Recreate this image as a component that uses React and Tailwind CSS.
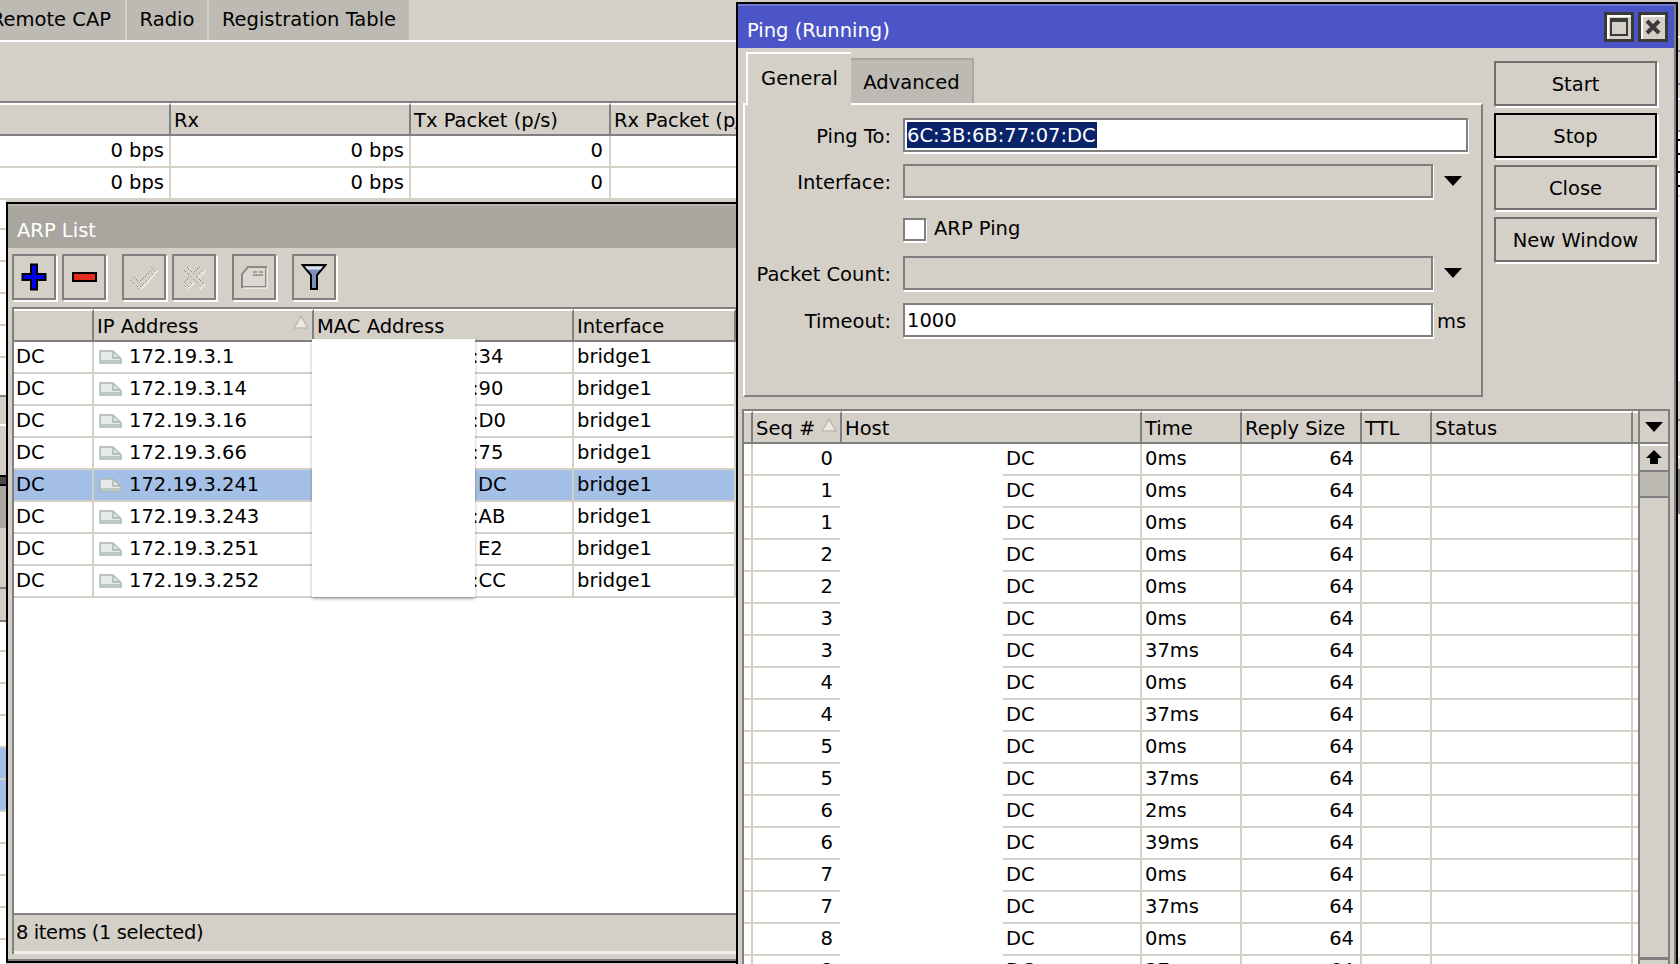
import React from 'react';

const arpRows = [
  { ip: '172.19.3.1', mac: ':34' },
  { ip: '172.19.3.14', mac: ':90' },
  { ip: '172.19.3.16', mac: ':D0' },
  { ip: '172.19.3.66', mac: ':75' },
  { ip: '172.19.3.241', mac: 'DC', selected: true },
  { ip: '172.19.3.243', mac: ':AB' },
  { ip: '172.19.3.251', mac: 'E2' },
  { ip: '172.19.3.252', mac: ':CC' },
];

const pingRows = [
  ['0', '0ms'], ['1', '0ms'], ['1', '0ms'], ['2', '0ms'], ['2', '0ms'], ['3', '0ms'],
  ['3', '37ms'], ['4', '0ms'], ['4', '37ms'], ['5', '0ms'], ['5', '37ms'], ['6', '2ms'],
  ['6', '39ms'], ['7', '0ms'], ['7', '37ms'], ['8', '0ms'], ['8', '37ms'],
];

const whiteRow = 'h-[32px] bg-white border-b-2 border-[#d4d0c8]';
const blueRow = 'h-[32px] bg-[#a4c0e6] border-b-2 border-[#d4d0c8]';

// what is still visible of the window behind the ARP list, on the far left
const leftStrip = [
  'h-[30px] bg-white border-b-2 border-[#d4d0c8]',
  whiteRow, whiteRow, whiteRow, whiteRow,
  'h-[37px] bg-white',
  'h-[29px] bg-[#d4d0c8] border-t-2 border-[#808080]',
  'h-[51px] bg-[#d4d0c8] border-t-2 border-white',
  'h-[11px] bg-[#4a4a4a] border-y-2 border-black',
  'h-[42px] bg-[#a9a69f]',
  'h-[59px] bg-[#d4d0c8]',
  'h-[33px] bg-[#d4d0c8] border-t-2 border-[#808080]',
  'h-[32px] bg-white border-t-2 border-[#808080] border-b-2 border-b-[#d4d0c8]',
  whiteRow, whiteRow, whiteRow,
  blueRow, blueRow,
  whiteRow, whiteRow, whiteRow, whiteRow, whiteRow,
];

// and on the far right, past the ping window
const rightStrip = [
  'h-[36px] bg-[#d4d0c8]', 'h-[2px] bg-white', 'h-[12px] bg-[#d4d0c8]', 'h-[2px] bg-[#808080]',
  'h-[31px] bg-[#d4d0c8]', 'h-[2px] bg-[#808080]', 'h-[13px] bg-[#d4d0c8]', 'h-[2px] bg-white',
  'h-[30px] bg-[#d4d0c8]', 'h-[2px] bg-[#808080]', 'h-[7px] bg-white', 'h-[2px] bg-black',
  'h-[12px] bg-white', 'h-[2px] bg-black', 'h-[16px] bg-white', 'h-[2px] bg-black',
  'h-[12px] bg-white', 'h-[2px] bg-black', 'h-[8px] bg-white', 'h-[2px] bg-[#d4d0c8]',
  'h-[184px] bg-white', 'h-[38px] bg-[#d4d0c8]', 'h-[2px] bg-[#808080]', 'h-[35px] bg-[#d4d0c8]',
  'h-[2px] bg-white', 'h-[11px] bg-[#d4d0c8]', 'h-[45px] bg-[#808080]', 'h-[444px] bg-[#e8e6e0]',
];

const SortMark = ({ className }) => (
  <svg width="16" height="14" viewBox="0 0 16 14" className={`absolute right-[3px] ${className}`}>
    <path d="M8 1 L15 13 L1 13 Z" fill="#ece9e3" stroke="#bdbab3" strokeWidth="1.5" />
  </svg>
);

const DropArrow = () => (
  <svg width="18" height="10" viewBox="0 0 18 10"><path d="M0 0 H18 L9 10 Z" fill="#000" /></svg>
);

const FileIcon = () => (
  <svg width="23" height="14" viewBox="0 0 23 14" className="shrink-0">
    <path d="M1 1 H14 L22 9 V13 H1 Z" fill="#e6ebe8" stroke="#a9b5b0" strokeWidth="1.5" />
    <path d="M14 1 V8 H22" fill="none" stroke="#a9b5b0" strokeWidth="1.5" />
    <path d="M2 10 H21 V13 H2 Z" fill="#bccac4" />
  </svg>
);

// greyed out check and cross: a dithered outline with a white edge below it
const Dither = ({ id }) => (
  <defs>
    <pattern id={id} width="3" height="3" patternUnits="userSpaceOnUse">
      <rect width="1.5" height="1.5" fill="#85857f" />
      <rect x="1.5" y="1.5" width="1.5" height="1.5" fill="#85857f" />
      <rect x="1.5" width="1.5" height="1.5" fill="#e8e6e0" />
      <rect y="1.5" width="1.5" height="1.5" fill="#e8e6e0" />
    </pattern>
  </defs>
);

const ToolButton = ({ children, className = '' }) => (
  <div className={`flex h-[46px] w-[44px] items-center justify-center border-2 border-[#808080] shadow-[2px_2px_0_#fff] ${className}`}>
    {children}
  </div>
);

const HeadCell = ({ children, className = '' }) => (
  <div className={`relative flex h-full items-center overflow-hidden whitespace-nowrap border-r-2 border-t-2 border-[#808080] border-t-white pl-[3px] pt-[2px] ${className}`}>
    {children}
  </div>
);

const Cell = ({ children, className = '' }) => (
  <div className={`flex h-[32px] items-center overflow-hidden whitespace-nowrap border-r-2 border-b-2 border-[#d4d0c8] pb-[1px] ${className}`}>
    {children}
  </div>
);

const SideButton = ({ children, active }) => (
  <div className={`flex h-[45px] w-[163px] items-center justify-center border-2 pt-[2px] shadow-[2px_2px_0_#fff] ${active ? 'border-black' : 'border-[#707070]'}`}>
    {children}
  </div>
);

const Field = ({ white, width, children }) => (
  <div className={`flex h-[34px] items-center border-2 border-[#808080] pl-[2px] shadow-[1px_2px_0_#fff] ${white ? 'bg-white' : ''} ${width}`}>
    {children}
  </div>
);

const FormRow = ({ label, gap, children }) => (
  <div className={`flex items-center ${gap}`}>
    <div className="w-[146px] whitespace-nowrap pt-[3px] text-right">{label}</div>
    <div className="ml-[12px] flex items-center">{children}</div>
  </div>
);

function BackWindow() {
  return (
    <div className="flex h-[200px] flex-col">
      <div className="flex h-[40px]">
        <div className="flex w-[125px] items-center justify-end overflow-hidden whitespace-nowrap bg-[#bdbab3] pr-[14px]">Remote CAP</div>
        <div className="ml-[2px] flex w-[80px] items-center justify-center bg-[#bdbab3]">Radio</div>
        <div className="ml-[2px] flex w-[200px] items-center justify-center whitespace-nowrap bg-[#bdbab3]">Registration Table</div>
      </div>
      <div className="h-[61px] border-t-2 border-white" />
      <div className="grid h-[35px] grid-cols-[171px_240px_200px_1fr] border-y-2 border-[#808080]">
        <HeadCell />
        <HeadCell>Rx</HeadCell>
        <HeadCell>Tx Packet (p/s)</HeadCell>
        <HeadCell>Rx Packet (p/s)</HeadCell>
      </div>
      {[0, 1].map((i) => (
        <div key={i} className="grid grid-cols-[171px_240px_200px_1fr] bg-white">
          <Cell className="justify-end pr-[5px]">0 bps</Cell>
          <Cell className="justify-end pr-[5px]">0 bps</Cell>
          <Cell className="justify-end pr-[6px]">0</Cell>
          <Cell />
        </div>
      ))}
    </div>
  );
}

function ArpWindow() {
  return (
    <div className="absolute left-[6px] top-[202px] flex h-[761px] w-[732px] flex-col border-2 border-black bg-[#d4d0c8]">
      <div className="flex h-[44px] items-center border-t-2 border-[#b8b5ae] bg-[#a9a69f] pl-[9px] pt-[8px] text-white">ARP List</div>

      <div className="flex h-[59px] items-start pl-[4px] pt-[6px]">
        <ToolButton>
          <svg width="26" height="28" viewBox="0 0 26 28"><path d="M10 1.5 H16 V11 H24.5 V17 H16 V26.5 H10 V17 H1.5 V11 H10 Z" fill="#0000f0" stroke="#000" strokeWidth="2" /></svg>
        </ToolButton>
        <ToolButton className="ml-[6px]">
          <svg width="25" height="10" viewBox="0 0 25 10"><rect x="1" y="1" width="23" height="8" fill="#e62a1c" stroke="#000" strokeWidth="2" /></svg>
        </ToolButton>
        <ToolButton className="ml-[16px]">
          <svg width="27" height="24" viewBox="0 0 27 24">
            <Dither id="dither-check" />
            <path d="M3 14 L10 21 L25 4" fill="none" stroke="#f4f3ef" strokeWidth="6" />
            <path d="M2 13 L9 20 L24 3" fill="none" stroke="url(#dither-check)" strokeWidth="6" />
            <path d="M2 13 L9 20 L24 3" fill="none" stroke="#d4d0c8" strokeWidth="2" />
          </svg>
        </ToolButton>
        <ToolButton className="ml-[6px]">
          <svg width="24" height="25" viewBox="0 0 24 25">
            <Dither id="dither-cross" />
            <path d="M4 4 L21 22 M21 4 L4 22" fill="none" stroke="#f4f3ef" strokeWidth="7" />
            <path d="M3 3 L20 21 M20 3 L3 21" fill="none" stroke="url(#dither-cross)" strokeWidth="7" />
            <path d="M3 3 L20 21 M20 3 L3 21" fill="none" stroke="#d4d0c8" strokeWidth="3" />
          </svg>
        </ToolButton>
        <ToolButton className="ml-[16px]">
          <svg width="28" height="24" viewBox="0 0 28 24">
            <path d="M8 2 H26 V22 H2 V9 Z" fill="#dcd9d2" stroke="#8a8a84" strokeWidth="2" />
            <path d="M3 23 H27 V3" fill="none" stroke="#fff" strokeWidth="1" />
            <path d="M13 7 H17 M19 7 H23 M13 10 H23" stroke="#8a8a84" strokeWidth="1.5" />
          </svg>
        </ToolButton>
        <ToolButton className="ml-[16px]">
          <svg width="26" height="28" viewBox="0 0 26 28">
            <path d="M1.5 2 H24.5 L16 12 V26 H10 V12 Z" fill="#7f8fbc" stroke="#000" strokeWidth="2" />
            <path d="M4 3.5 H22 L19.5 6.5 H6.5 Z" fill="#dfe3ee" />
          </svg>
        </ToolButton>
      </div>

      <div className="ml-[4px] flex min-h-0 flex-1 flex-col border-l-2 border-[#808080]">
        <div className="grid h-[35px] grid-cols-[80px_220px_260px_1fr] border-y-2 border-[#808080]">
          <HeadCell />
          <HeadCell>IP Address<SortMark className="top-[4px]" /></HeadCell>
          <HeadCell>MAC Address</HeadCell>
          <HeadCell>Interface</HeadCell>
        </div>
        <div className="relative min-h-0 flex-1 bg-white">
          {arpRows.map((row) => (
            <div key={row.ip} className={`grid grid-cols-[80px_220px_260px_1fr] ${row.selected ? 'bg-[#a4c0e6]' : ''}`}>
              <Cell className="pl-[2px]">DC</Cell>
              <Cell className="pl-[5px]"><FileIcon /><span className="ml-[7px]">{row.ip}</span></Cell>
              <Cell className={row.mac[0] === ':' ? 'pl-[158px]' : 'pl-[164px]'}>{row.mac}</Cell>
              <Cell className="pl-[3px]">bridge1</Cell>
            </div>
          ))}
          {/* blanked out MAC addresses */}
          <div className="absolute left-[298px] top-[-3px] h-[258px] w-[163px] bg-white shadow-[0_2px_3px_rgba(0,0,0,0.3)]" />
        </div>
        <div className="flex h-[41px] items-center border-t-2 border-[#808080] border-b-[3px] border-b-[#f0eee9] pl-[2px] tracking-[-0.4px]">8 items (1 selected)</div>
      </div>
      <div className="h-[7px] border-b-2 border-[#808080]" />
    </div>
  );
}

function PingWindow() {
  return (
    <div className="absolute left-[736px] top-[2px] flex h-[962px] w-[942px] flex-col overflow-hidden border-x-2 border-t-2 border-black bg-[#d4d0c8]">
      <div className="flex h-[44px] shrink-0 items-center border-t-2 border-[#7078d0] bg-[#4b55c7] pl-[9px] text-white">
        <span className="flex-1 pt-[7px]">Ping (Running)</span>
        <div className="mr-[4px] flex h-[30px] w-[30px] items-center justify-center border-[3px] border-[#3a3a3a] bg-[#d4d0c8] shadow-[inset_2px_2px_0_#fff]">
          <div className="h-[18px] w-[18px] border-2 border-t-4 border-[#3a3a3a]" />
        </div>
        <div className="mr-[8px] flex h-[30px] w-[30px] items-center justify-center border-[3px] border-[#3a3a3a] bg-[#d4d0c8] shadow-[inset_2px_2px_0_#fff]">
          <svg width="16" height="16" viewBox="0 0 16 16"><path d="M2 2 L14 14 M14 2 L2 14" stroke="#3a3a3a" strokeWidth="4" /></svg>
        </div>
      </div>

      <div className="flex h-[361px] shrink-0">
        <div className="ml-[5px] mt-[4px] flex w-[740px] flex-col">
          <div className="flex h-[51px] items-end pl-[3px]">
            <div className="z-10 mb-[-2px] flex h-[53px] w-[105px] items-center justify-center border-l-2 border-t-2 border-white bg-[#d4d0c8] pb-[1px]">General</div>
            <div className="flex h-[45px] w-[123px] items-center justify-center border-t-2 border-r-2 border-[#a9a69f] bg-[#bdbab3] pt-[2px]">Advanced</div>
          </div>
          <div className="h-[294px] border-t-2 border-white border-r-2 border-r-[#808080] border-b-2 border-b-[#808080] border-l-2 border-l-white">
            <FormRow label="Ping To:" gap="mt-[13px]">
              <Field white width="w-[565px]">
                <span className="flex h-[26px] w-[190px] items-center bg-[#0a246a] pt-[1px] text-white">6C:3B:6B:77:07:DC</span>
              </Field>
            </FormRow>
            <FormRow label="Interface:" gap="mt-[12px]">
              <Field width="w-[530px]" />
              <div className="ml-[11px]"><DropArrow /></div>
            </FormRow>
            <div className="ml-[158px] mt-[19px] flex h-[25px] items-center">
              <div className="h-[23px] w-[23px] border-2 border-[#808080] bg-white shadow-[1px_2px_0_#fff]" />
              <span className="ml-[8px] pb-[2px]">ARP Ping</span>
            </div>
            <FormRow label="Packet Count:" gap="mt-[14px]">
              <Field width="w-[530px]" />
              <div className="ml-[11px]"><DropArrow /></div>
            </FormRow>
            <FormRow label="Timeout:" gap="mt-[13px]">
              <Field white width="w-[530px]"><span className="pt-[1px]">1000</span></Field>
              <span className="ml-[4px] pt-[3px]">ms</span>
            </FormRow>
          </div>
        </div>
        <div className="ml-[11px] mt-[13px] flex flex-col gap-[7px]">
          <SideButton>Start</SideButton>
          <SideButton active>Stop</SideButton>
          <SideButton>Close</SideButton>
          <SideButton>New Window</SideButton>
        </div>
      </div>

      <div className="ml-[4px] flex min-h-0 flex-1">
        <div className="flex w-[896px] flex-col border-l-2 border-[#808080]">
          <div className="grid h-[35px] shrink-0 grid-cols-[9px_89px_300px_100px_120px_70px_201px_1fr] border-y-2 border-[#808080]">
            <HeadCell />
            <HeadCell>Seq #<SortMark className="top-[5px]" /></HeadCell>
            <HeadCell>Host</HeadCell>
            <HeadCell>Time</HeadCell>
            <HeadCell>Reply Size</HeadCell>
            <HeadCell>TTL</HeadCell>
            <HeadCell>Status</HeadCell>
            <div className="border-t-2 border-white" />
          </div>
          <div className="relative min-h-0 flex-1 overflow-hidden bg-white">
            {pingRows.map((row, i) => (
              <div key={i} className="grid grid-cols-[9px_89px_300px_100px_120px_70px_201px_1fr]">
                <Cell />
                <Cell className="justify-end pr-[7px]">{row[0]}</Cell>
                <Cell className="pl-[164px]">DC</Cell>
                <Cell className="pl-[3px]">{row[1]}</Cell>
                <Cell className="justify-end pr-[6px]">64</Cell>
                <Cell />
                <Cell />
                <div className="h-[32px] border-b-2 border-[#d4d0c8]" />
              </div>
            ))}
            {/* blanked out host addresses */}
            <div className="absolute bottom-0 left-[96px] top-0 w-[163px] bg-white" />
          </div>
        </div>
        <div className="flex w-[32px] flex-col border-x-2 border-[#808080]">
          <div className="flex h-[35px] shrink-0 items-center justify-center border-y-2 border-[#808080]">
            <DropArrow />
          </div>
          <div className="flex h-[28px] shrink-0 items-center justify-center border-b-2 border-[#808080] shadow-[inset_0_2px_0_#fff]">
            <svg width="16" height="14" viewBox="0 0 16 14"><path d="M8 0 L16 8 H12 V14 H4 V8 H0 Z" fill="#000" /></svg>
          </div>
          <div className="h-[26px] shrink-0 border-b-2 border-[#808080] bg-[#bdbab3]" />
          <div className="flex-1" />
          <div className="h-[7px] shrink-0 border-t-[3px] border-[#808080]" />
        </div>
      </div>
      <div className="absolute bottom-0 right-0 h-full w-[2px] bg-[#808080]" />
    </div>
  );
}

export default function App() {
  return (
    <div className="relative h-[964px] w-[1680px] overflow-hidden bg-[#d4d0c8] text-[19.5px] leading-none text-black [font-family:'DejaVu_Sans',sans-serif]">
      <BackWindow />
      <div className="absolute left-0 top-[200px] flex w-[6px] flex-col">
        {leftStrip.map((style, i) => (
          <div key={i} className={style} />
        ))}
      </div>
      <div className="absolute right-0 top-0 flex w-[2px] flex-col">
        {rightStrip.map((style, i) => (
          <div key={i} className={style} />
        ))}
      </div>
      <ArpWindow />
      <PingWindow />
    </div>
  );
}
